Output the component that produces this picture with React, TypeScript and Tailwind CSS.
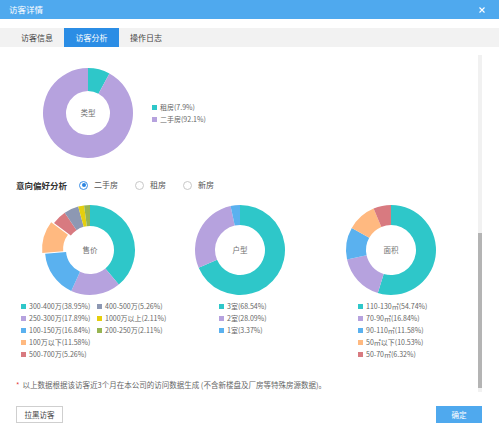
import React from "react";

const C = {
  teal: "#2ec7c9",
  purple: "#b6a2de",
  blue: "#5ab1ef",
  orange: "#ffb980",
  red: "#d87a80",
  gray: "#8d98b3",
  yellow: "#e5cf0d",
  green: "#97b552",
};

type Seg = { v: number; color: string; offset?: number };

function pt(cx: number, cy: number, r: number, f: number) {
  const a = f * Math.PI * 2;
  return [cx + r * Math.sin(a), cy - r * Math.cos(a)];
}

function Donut({ segs, rOut, rIn, label }: { segs: Seg[]; rOut: number; rIn: number; label: string }) {
  const total = segs.reduce((s, x) => s + x.v, 0);
  let acc = 0;
  const cx = 50;
  const cy = 50;
  return (
    <svg width="100" height="100" viewBox="0 0 100 100" className="block shrink-0">
      {segs.map((s, i) => {
        const f0 = acc / total;
        acc += s.v;
        const f1 = acc / total;
        const mid = (f0 + f1) / 2;
        const off = s.offset ?? 0;
        const dx = off * Math.sin(mid * Math.PI * 2);
        const dy = -off * Math.cos(mid * Math.PI * 2);
        const large = f1 - f0 > 0.5 ? 1 : 0;
        const [x0, y0] = pt(cx, cy, rOut, f0);
        const [x1, y1] = pt(cx, cy, rOut, f1);
        const [x2, y2] = pt(cx, cy, rIn, f1);
        const [x3, y3] = pt(cx, cy, rIn, f0);
        const d = `M${x0} ${y0} A${rOut} ${rOut} 0 ${large} 1 ${x1} ${y1} L${x2} ${y2} A${rIn} ${rIn} 0 ${large} 0 ${x3} ${y3} Z`;
        return <path key={i} d={d} fill={s.color} transform={`translate(${dx} ${dy})`} />;
      })}
      <text
        x={cx}
        y={cy + 2.6}
        textAnchor="middle"
        fontSize="7.5"
        fill="#707070"
        fontFamily="'Noto Sans CJK SC', sans-serif"
      >
        {label}
      </text>
    </svg>
  );
}

function LegendItem({ color, text }: { color: string; text: string }) {
  return (
    <div className="flex h-[12px] items-center whitespace-nowrap">
      <span className="mr-[3px] inline-block h-[5px] w-[5px] shrink-0" style={{ backgroundColor: color }} />
      <span className="text-[7px] leading-none text-[#666]">{text}</span>
    </div>
  );
}

function Radio({ checked, label }: { checked?: boolean; label: string }) {
  return (
    <div className="flex items-center">
      <span
        className={
          checked
            ? "flex h-[9px] w-[9px] items-center justify-center rounded-full border border-[#3a8ee6] bg-white"
            : "flex h-[9px] w-[9px] items-center justify-center rounded-full border border-[#c8c8c8] bg-white"
        }
      >
        {checked && <span className="h-[4px] w-[4px] rounded-full bg-[#2a84e0]" />}
      </span>
      <span className="ml-[6px] text-[8px] leading-none text-[#555]">{label}</span>
    </div>
  );
}

export default function App() {
  return (
    <div className="flex h-[431px] w-[499px] flex-col overflow-hidden bg-white font-['Noto_Sans_CJK_SC','Noto_Sans',sans-serif]">
      {/* header */}
      <div className="flex h-[19px] shrink-0 items-center justify-between bg-[#4fa9ee] pl-[9px] pr-[14px]">
        <span className="text-[8.5px] leading-none text-white">访客详情</span>
        <svg width="6" height="6" viewBox="0 0 6 6">
          <path d="M0.5 0.5 L5.5 5.5 M5.5 0.5 L0.5 5.5" stroke="#fff" strokeWidth="1.1" />
        </svg>
      </div>

      {/* tabs */}
      <div className="mt-[9px] flex h-[19px] shrink-0 items-stretch bg-[#f2f2f2] text-[8px] leading-none text-[#444]">
        <div className="flex w-[64px] items-center pl-[21px]">访客信息</div>
        <div className="flex w-[55px] items-center justify-center bg-[#2b8de5] text-white">访客分析</div>
        <div className="flex items-center pl-[11px]">操作日志</div>
      </div>

      {/* scroll area */}
      <div className="mt-[8px] flex h-[337px] shrink-0">
        <div className="flex w-[478px] flex-col">
          {/* type donut */}
          <div className="flex h-[108px]">
            <div className="ml-[38px] mt-[8px]">
              <Donut
                rOut={45}
                rIn={22}
                label="类型"
                segs={[
                  { v: 7.9, color: C.teal },
                  { v: 92.1, color: C.purple },
                ]}
              />
            </div>
            <div className="ml-[14px] mt-[46px] flex flex-col">
              <LegendItem color={C.teal} text="租房(7.9%)" />
              <LegendItem color={C.purple} text="二手房(92.1%)" />
            </div>
          </div>

          {/* title row */}
          <div className="mt-[14px] flex h-[16px] items-center pl-[16px]">
            <span className="text-[8.5px] font-bold leading-none text-[#333]">意向偏好分析</span>
            <div className="ml-[12px] flex items-center gap-[17px]">
              <Radio checked label="二手房" />
              <Radio label="租房" />
              <Radio label="新房" />
            </div>
          </div>

          {/* three donuts */}
          <div className="mt-[7px] flex">
            <div className="flex w-[170px] flex-col">
              <div className="ml-[40px]">
                <Donut
                  rOut={45}
                  rIn={24}
                  label="售价"
                  segs={[
                    { v: 38.95, color: C.teal },
                    { v: 17.89, color: C.purple },
                    { v: 16.84, color: C.blue },
                    { v: 11.58, color: C.orange, offset: 3 },
                    { v: 5.26, color: C.red },
                    { v: 5.26, color: C.gray },
                    { v: 2.11, color: C.yellow },
                    { v: 2.11, color: C.green },
                  ]}
                />
              </div>
              <div className="ml-[21px] grid grid-flow-col grid-cols-[76px_auto] grid-rows-5">
                <LegendItem color={C.teal} text="300-400万(38.95%)" />
                <LegendItem color={C.purple} text="250-300万(17.89%)" />
                <LegendItem color={C.blue} text="100-150万(16.84%)" />
                <LegendItem color={C.orange} text="100万以下(11.58%)" />
                <LegendItem color={C.red} text="500-700万(5.26%)" />
                <LegendItem color={C.gray} text="400-500万(5.26%)" />
                <LegendItem color={C.yellow} text="1000万以上(2.11%)" />
                <LegendItem color={C.green} text="200-250万(2.11%)" />
              </div>
            </div>

            <div className="flex w-[160px] flex-col">
              <div className="ml-[20px]">
                <Donut
                  rOut={45}
                  rIn={25}
                  label="户型"
                  segs={[
                    { v: 68.54, color: C.teal },
                    { v: 28.09, color: C.purple },
                    { v: 3.37, color: C.blue },
                  ]}
                />
              </div>
              <div className="ml-[49px] flex flex-col">
                <LegendItem color={C.teal} text="3室(68.54%)" />
                <LegendItem color={C.purple} text="2室(28.09%)" />
                <LegendItem color={C.blue} text="1室(3.37%)" />
              </div>
            </div>

            <div className="flex w-[148px] flex-col">
              <div className="ml-[11px]">
                <Donut
                  rOut={45}
                  rIn={25}
                  label="面积"
                  segs={[
                    { v: 54.74, color: C.teal },
                    { v: 16.84, color: C.purple },
                    { v: 11.58, color: C.blue },
                    { v: 10.53, color: C.orange },
                    { v: 6.32, color: C.red },
                  ]}
                />
              </div>
              <div className="ml-[28px] flex flex-col">
                <LegendItem color={C.teal} text="110-130㎡(54.74%)" />
                <LegendItem color={C.purple} text="70-90㎡(16.84%)" />
                <LegendItem color={C.blue} text="90-110㎡(11.58%)" />
                <LegendItem color={C.orange} text="50㎡以下(10.53%)" />
                <LegendItem color={C.red} text="50-70㎡(6.32%)" />
              </div>
            </div>
          </div>

          {/* footnote */}
          <div className="mt-[19px] flex h-[12px] items-center pl-[16px] text-[7.5px] leading-none text-[#666]">
            <span className="mr-[3px] text-[#e4393c]">*</span>
            <span>以上数据根据该访客近3个月在本公司的访问数据生成 (不含新楼盘及厂房等特殊房源数据)。</span>
          </div>
        </div>

        {/* scrollbar */}
        <div className="flex w-[4px] flex-col bg-[#f1f1f1]">
          <div className="mt-[178px] h-[155px] w-[4px] bg-[#b4b4b4]" />
        </div>
      </div>

      {/* buttons */}
      <div className="mt-[14px] flex items-center justify-between pl-[16px] pr-[17px]">
        <div className="flex h-[17px] w-[47px] items-center justify-center border border-[#cfcfcf] bg-white text-[7.5px] leading-none text-[#444]">
          拉黑访客
        </div>
        <div className="flex h-[17px] w-[46px] items-center justify-center bg-[#4fa9ee] text-[7.5px] leading-none text-white">
          确定
        </div>
      </div>
    </div>
  );
}
